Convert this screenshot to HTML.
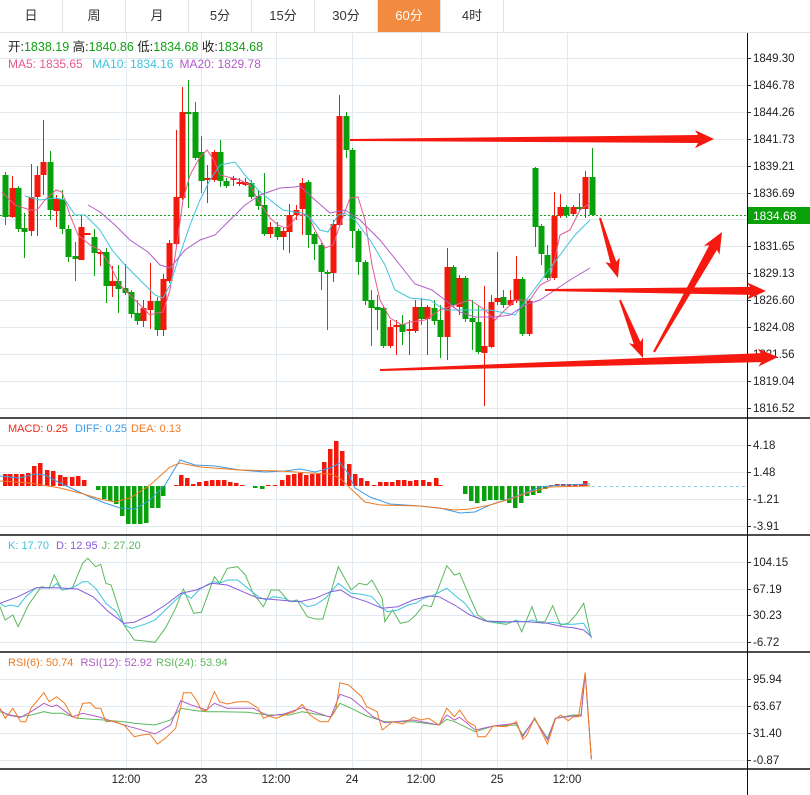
<!DOCTYPE html>
<html><head><meta charset="utf-8">
<style>
html,body{margin:0;padding:0;background:#fff;width:810px;height:795px;overflow:hidden;font-family:"Liberation Sans","Noto Sans CJK SC",sans-serif;}
.tabs{position:absolute;left:0;top:0;width:810px;height:32px;border-bottom:1px solid #e3e3e3;}
.tab{position:absolute;top:0;height:32px;width:62px;line-height:32px;text-align:center;font-size:13px;color:#333;border-right:1px solid #e3e3e3;}
.tab.on{background:#f28a3f;color:#fff;}
svg{position:absolute;left:0;top:0;}
</style></head><body>
<div class="tabs">
<div class="tab" style="left:0">日</div>
<div class="tab" style="left:63px">周</div>
<div class="tab" style="left:126px">月</div>
<div class="tab" style="left:189px">5分</div>
<div class="tab" style="left:252px">15分</div>
<div class="tab" style="left:315px">30分</div>
<div class="tab on" style="left:378px">60分</div>
<div class="tab" style="left:441px">4时</div>
</div>
<svg id="s" width="810" height="795" xmlns="http://www.w3.org/2000/svg" font-family="Liberation Sans, Noto Sans CJK SC, sans-serif">
<g id="grid"></g>
<g id="body"></g>
<text x="8" y="51" font-size="12.5" fill="#222">开:<tspan fill="#11a011">1838.19</tspan>  高:<tspan fill="#11a011">1840.86</tspan>  低:<tspan fill="#11a011">1834.68</tspan>  收:<tspan fill="#11a011">1834.68</tspan></text>
<text x="8" y="68" font-size="12" fill="#e8578e">MA5: 1835.65 <tspan dx="6" fill="#3ec3dc">MA10: 1834.16</tspan><tspan dx="6" fill="#b25cc8">MA20: 1829.78</tspan></text>
<text x="8" y="432" font-size="11" fill="#f02a1a">MACD: 0.25 <tspan dx="4" fill="#3d9be8">DIFF: 0.25</tspan><tspan dx="4" fill="#f07a20">DEA: 0.13</tspan></text>
<text x="8" y="549" font-size="11" fill="#3ec3dc">K: 17.70 <tspan dx="4" fill="#8a5cd8">D: 12.95</tspan><tspan dx="4" fill="#5cb85c">J: 27.20</tspan></text>
<text x="8" y="666" font-size="11" fill="#f07a20">RSI(6): 50.74 <tspan dx="4" fill="#b25cc8">RSI(12): 52.92</tspan><tspan dx="4" fill="#5cb85c">RSI(24): 53.94</tspan></text>
</svg>
<script>
var NS="http://www.w3.org/2000/svg",G=document.getElementById('grid'),B=document.getElementById('body');
function el(p,t,a,txt){var e=document.createElementNS(NS,t);for(var k in a)e.setAttribute(k,a[k]);if(txt!=null)e.textContent=txt;p.appendChild(e);return e;}
var GC="#e2eaf1";
// vertical grid
[126,201,276,352,421,497,567].forEach(function(x){el(G,'line',{x1:x+.5,y1:33,x2:x+.5,y2:769,stroke:GC});});
// horizontal grid & labels
function hg(y,lab){el(G,'line',{x1:0,y1:y+.5,x2:747,y2:y+.5,stroke:GC});el(G,'line',{x1:747,y1:y+.5,x2:751,y2:y+.5,stroke:'#333'});if(lab)el(G,'text',{x:753,y:y+4,'font-size':11.5,fill:'#222'},lab);}
var pl=["1849.30","1846.78","1844.26","1841.73","1839.21","1836.69","","1831.65","1829.13","1826.60","1824.08","1821.56","1819.04","1816.52"];
pl.forEach(function(l,i){hg(Math.round(58+i*26.9),l);});
[[445,"4.18"],[472,"1.48"],[499,"-1.21"],[526,"-3.91"]].forEach(function(a){hg(a[0],a[1]);});
[[562,"104.15"],[589,"67.19"],[615,"30.23"],[642,"-6.72"]].forEach(function(a){hg(a[0],a[1]);});
[[679,"95.94"],[706,"63.67"],[733,"31.40"],[760,"-0.87"]].forEach(function(a){hg(a[0],a[1]);});
// separators
[418,535,652,769].forEach(function(y){el(G,'line',{x1:0,y1:y,x2:810,y2:y,stroke:'#111','stroke-width':1.4});});
el(G,'line',{x1:747.5,y1:33,x2:747.5,y2:795,stroke:'#111'});
// date labels
[[126,"12:00"],[201,"23"],[276,"12:00"],[352,"24"],[421,"12:00"],[497,"25"],[567,"12:00"]].forEach(function(a){el(G,'text',{x:a[0],y:783,'font-size':11.5,fill:'#222','text-anchor':'middle'},a[1]);});
// dotted price line
el(B,'line',{x1:0,y1:215.5,x2:747,y2:215.5,stroke:'#1a9a1a','stroke-dasharray':'2,2'});
var R="#f2190c",GR="#08a00c";
// candles [x,top,bot,wt,wb,c]
var C=[[5,175,217,172,225,'g'],[12,188,217,176,218,'r'],[18,188,229,186,232,'g'],[24,228,232,213,258,'g'],[31,197,231,164,236,'r'],[37,175,197,166,236,'r'],[43,162,175,120,195,'r'],[50,162,210,151,220,'g'],[56,199,211,195,227,'r'],[62,199,229,190,234,'g'],[68,229,257,225,262,'g'],[75,256,259,242,281,'g'],[81,227,260,216,260,'r'],[87,233,235,233,235,'r'],[94,237,253,229,276,'g'],[100,252,254,250,266,'r'],[106,252,286,248,303,'g'],[112,281,286,266,297,'r'],[118,281,289,265,313,'g'],[125,288,293,264,295,'g'],[131,292,314,290,318,'g'],[137,313,321,300,325,'g'],[143,308,321,300,327,'r'],[150,301,310,263,329,'r'],[157,301,330,297,336,'g'],[163,279,330,274,336,'r'],[169,243,281,240,283,'r'],[176,197,244,130,246,'r'],[182,112,198,87,200,'r'],[188,112,114,80,208,'g'],[195,112,158,102,160,'g'],[201,152,181,136,193,'g'],[207,178,180,165,203,'r'],[214,152,180,150,182,'r'],[220,152,181,140,187,'g'],[226,181,186,178,188,'g'],[233,178,180,176,186,'r'],[239,182,184,178,186,'r'],[245,182,185,178,186,'r'],[251,183,197,180,199,'g'],[258,196,206,190,210,'g'],[264,205,234,173,236,'g'],[270,227,234,222,238,'r'],[277,227,237,222,240,'g'],[283,231,237,228,250,'r'],[289,215,232,204,253,'r'],[296,210,215,205,220,'r'],[302,183,209,178,235,'r'],[308,182,235,180,248,'g'],[314,234,244,232,260,'g'],[321,245,272,243,290,'g'],[327,272,274,270,330,'g'],[333,224,273,220,282,'r'],[339,116,225,95,227,'r'],[346,116,150,112,158,'g'],[352,150,231,148,248,'g'],[358,231,262,229,275,'g'],[365,262,301,260,305,'g'],[371,300,308,290,346,'g'],[377,307,310,295,330,'g'],[383,308,346,306,348,'g'],[390,327,346,320,348,'r'],[396,325,327,320,355,'r'],[402,324,332,315,345,'g'],[409,329,331,320,355,'r'],[415,307,331,300,333,'r'],[421,307,319,298,325,'g'],[427,307,319,305,355,'r'],[434,308,321,300,325,'g'],[440,320,337,305,358,'g'],[447,267,337,248,360,'r'],[453,267,305,265,308,'g'],[459,278,307,275,315,'r'],[465,278,319,276,322,'g'],[472,318,322,300,350,'g'],[478,322,352,305,354,'g'],[484,346,353,286,406,'r'],[491,302,347,295,348,'r'],[497,298,302,252,305,'r'],[503,297,305,290,308,'g'],[510,300,305,290,306,'r'],[516,279,301,256,303,'r'],[522,279,334,277,336,'g'],[529,301,334,299,336,'r'],[535,168,227,167,247,'g'],[541,226,254,224,265,'g'],[547,255,278,245,280,'g'],[554,216,278,192,280,'r'],[560,207,216,194,218,'r'],[566,207,215,205,218,'g'],[573,207,214,205,216,'r'],[579,207,209,193,210,'g'],[585,177,209,171,218,'r'],[592,177,215,148,216,'g']];
C.forEach(function(c){var col=c[5]=='r'?R:GR;el(B,'line',{x1:c[0]+.5,y1:c[3],x2:c[0]+.5,y2:c[4],stroke:col});el(B,'rect',{x:c[0]-2.5,y:c[1],width:6,height:Math.max(1.5,c[2]-c[1]),fill:col});});
function line(pts,col,w){el(B,'polyline',{points:pts.map(function(p){return p.join(',')}).join(' '),fill:'none',stroke:col,'stroke-width':w||1});}
line([[2,192],[15,205],[30,210],[37,210],[45,200],[56,190],[62,192],[70,215],[78,235],[90,245],[100,250],[110,265],[120,285],[130,295],[140,305],[150,315],[157,313],[163,312],[170,290],[176,250],[183,200],[190,175],[200,157],[207,150],[214,160],[220,175],[232,178],[240,180],[250,185],[258,200],[270,218],[278,225],[285,228],[290,225],[298,215],[308,215],[315,230],[325,248],[333,245],[340,225],[350,198],[358,197],[365,220],[372,265],[380,300],[390,318],[402,325],[410,322],[425,320],[440,310],[455,305],[470,300],[485,310],[495,320],[505,310],[515,300],[530,300],[540,285],[550,280],[560,235],[570,230],[580,210],[590,203]],"#e8578e");
line([[25,196],[40,200],[55,198],[65,200],[75,215],[85,215],[100,230],[112,250],[125,265],[140,280],[155,295],[163,298],[170,285],[178,260],[190,225],[200,200],[210,180],[220,165],[235,162],[245,175],[258,190],[270,200],[283,210],[295,212],[303,213],[310,218],[320,230],[328,232],[338,215],[345,213],[355,220],[370,240],[385,265],[395,290],[410,298],[430,300],[445,310],[460,310],[475,310],[490,310],[505,313],[515,315],[530,295],[545,275],[560,255],[575,235],[590,220]],"#3ec3dc");
line([[88,205],[100,212],[115,225],[130,240],[148,252],[160,265],[170,268],[185,250],[200,240],[215,235],[230,220],[245,205],[260,195],[280,188],[295,187],[300,186],[315,200],[330,213],[345,210],[360,220],[380,240],[400,265],[415,284],[432,290],[445,300],[460,312],[475,317],[495,317],[510,315],[525,305],[540,300],[555,290],[570,280],[590,268]],"#b25cc8");
// MACD
var Z=486;
var M=[[5,12],[10,12],[16,12],[22,12],[28,13],[34,20],[40,23],[47,16],[53,15],[60,11],[65,9],[72,9],[78,10],[84,6],[98,-4],[104,-13],[110,-15],[116,-18],[122,-30],[128,-38],[134,-38],[140,-38],[146,-37],[152,-22],[158,-22],[163,-10],[176,1],[181,11],[187,8],[193,2],[199,4],[206,5],[212,6],[218,6],[224,6],[230,4],[236,3],[242,1],[255,-2],[262,-3],[268,1],[275,1],[282,6],[288,11],[294,12],[300,13],[306,11],[312,12],[318,12],[324,24],[330,37],[336,45],[342,35],[349,22],[355,12],[361,8],[367,5],[374,1],[380,4],[386,4],[392,4],[398,6],[404,6],[410,5],[416,6],[423,6],[429,4],[436,8],[440,1],[465,-8],[471,-15],[477,-17],[484,-15],[490,-14],[496,-14],[502,-14],[509,-17],[515,-22],[521,-17],[527,-10],[533,-9],[539,-7],[545,-3],[551,1],[557,2],[563,2],[569,2],[575,2],[581,2],[585,5]];
M.forEach(function(m){var h=m[1];el(B,'rect',{x:m[0]-2,y:h>0?Z-h:Z,width:4.5,height:Math.abs(h),fill:h>0?R:GR});});
el(B,'line',{x1:592,y1:Z+.5,x2:747,y2:Z+.5,stroke:'#8fd0ef','stroke-dasharray':'3,3'});
line([[0,476],[20,478],[35,474],[45,475],[60,483],[75,490],[90,497],[105,503],[120,508],[135,509],[150,500],[165,485],[180,460],[195,465],[215,466],[240,470],[265,472],[285,471],[300,469],[315,472],[330,468],[340,463],[348,473],[355,488],[370,497],[390,504],[420,506],[440,508],[460,513],[475,512],[490,505],[505,500],[520,495],[540,487],[560,485],[590,484]],"#3d9be8");
line([[0,481],[30,483],[60,488],[80,493],[100,499],[115,502],[130,498],[150,485],[170,467],[180,463],[200,467],[240,470],[280,471],[310,473],[330,474],[340,478],[350,488],[365,502],[380,505],[420,506],[455,510],[470,509],[490,505],[510,499],[530,492],[550,487],[590,486]],"#f07a20");
function zl(pts,oy,col){line(pts.map(function(p){return [+(p[0]/1.936).toFixed(1),+(p[1]/3+oy).toFixed(1)];}),col);}
zl([[0,215],[10,255],[25,240],[35,275],[55,210],[80,155],[95,160],[105,120],[120,165],[140,160],[160,85],[170,70],[185,95],[195,88],[205,145],[215,150],[240,270],[260,315],[280,318],[300,322],[320,280],[340,220],[355,162],[375,235],[390,232],[415,125],[425,145],[440,100],[460,95],[475,120],[490,175],[510,215],[525,165],[540,165],[560,200],[575,195],[595,245],[610,252],[625,252],[655,95],[680,165],[695,145],[710,150],[720,135],[740,190],[745,260],[760,225],[775,265],[790,260],[805,240],[820,210],[835,215],[865,92],[880,120],[890,115],[905,170],[925,240],[945,260],[980,268],[1000,255],[1010,290],[1030,215],[1040,260],[1055,260],[1070,212],[1085,270],[1100,265],[1115,240],[1130,205],[1145,310]],535,"#5cb85c");
zl([[0,205],[10,215],[20,210],[35,215],[50,185],[70,158],[90,158],[100,158],[110,145],[120,165],[135,160],[145,155],[160,140],[170,140],[185,160],[205,205],[225,230],[240,270],[255,280],[280,268],[300,255],[320,225],[340,195],[355,175],[370,190],[385,165],[400,150],[415,140],[425,145],[440,135],[460,135],[480,160],[500,185],[515,195],[530,185],[550,190],[565,200],[580,198],[595,215],[610,210],[630,190],[655,145],[680,175],[700,178],[720,185],[740,220],[750,230],[770,225],[790,210],[805,205],[820,190],[840,180],[865,160],[880,180],[900,205],[920,245],[940,258],[960,262],[980,262],[1000,258],[1020,260],[1030,255],[1050,265],[1070,262],[1090,268],[1110,268],[1130,265],[1145,305]],535,"#3ec3dc");
zl([[0,205],[35,185],[70,158],[110,158],[150,162],[180,185],[210,230],[240,265],[260,262],[290,240],[320,210],[350,175],[380,165],[410,145],[440,150],[470,170],[500,190],[540,195],[580,200],[610,190],[640,170],[660,165],[680,185],[710,200],[740,220],[770,215],[800,195],[830,183],[850,185],[880,210],[910,240],[940,258],[980,260],[1020,260],[1060,265],[1090,275],[1110,278],[1130,285],[1145,305]],535,"#8a5cd8");
zl([[0,215],[20,225],[40,230],[60,225],[85,215],[100,220],[120,220],[150,235],[200,240],[240,245],[260,250],[300,255],[330,240],[350,205],[380,212],[400,215],[430,215],[480,217],[520,225],[560,225],[585,215],[640,230],[658,190],[680,205],[710,228],[745,245],[800,245],[850,255],[865,238],[880,245],[920,275],[955,258],[1000,255],[1012,285],[1035,238],[1060,295],[1075,235],[1110,225],[1125,225],[1133,98],[1145,358]],640,"#5cb85c");
zl([[0,210],[15,225],[40,232],[60,215],[85,190],[100,200],[110,195],[140,230],[160,220],[190,230],[220,245],[240,255],[270,268],[300,282],[330,255],[350,182],[370,195],[400,210],[415,190],[440,205],[490,205],[520,228],[550,222],[585,203],[640,232],[658,163],[680,175],[700,200],[720,228],[745,248],[800,240],[850,255],[865,225],[880,240],[890,232],[920,270],[955,258],[1000,250],[1012,290],[1035,235],[1060,300],[1075,235],[1110,228],[1125,228],[1133,98],[1145,358]],640,"#b25cc8");
zl([[0,205],[10,235],[25,205],[40,245],[50,245],[60,205],[85,158],[95,185],[110,170],[125,190],[140,230],[150,235],[160,190],[175,188],[185,205],[195,205],[205,245],[220,243],[240,255],[260,290],[275,285],[290,282],[305,312],[320,295],[340,265],[350,200],[355,158],[370,158],[380,180],[390,210],[400,212],[415,155],[425,185],[440,192],[460,185],[480,185],[500,205],[510,235],[520,228],[535,235],[550,225],[570,215],[585,193],[600,225],[620,245],[635,245],[650,210],[658,128],[675,135],[700,170],[710,200],[730,215],[740,270],[760,245],[780,252],[800,232],[815,240],[830,235],[850,255],[865,205],[880,230],[890,210],[905,245],[920,258],[925,290],[940,290],[955,258],[980,260],[1000,245],[1012,298],[1020,285],[1035,233],[1060,312],[1075,238],[1085,225],[1100,242],[1110,230],[1120,230],[1133,98],[1145,358]],640,"#f07a20");
// price box
el(B,'rect',{x:748,y:207,width:62,height:17,fill:'#0aa00a'});
el(B,'text',{x:753,y:220,'font-size':12,fill:'#fff'},"1834.68");
// arrows
function arrow(x1,y1,x2,y2,w1,w2,hw,hl){var dx=x2-x1,dy=y2-y1,L=Math.sqrt(dx*dx+dy*dy),ux=dx/L,uy=dy/L,nx=-uy,ny=ux;var bx=x2-ux*hl,by=y2-uy*hl;
var p=[[x1+nx*w1/2,y1+ny*w1/2],[bx+nx*w2/2,by+ny*w2/2],[bx-ux*3+nx*hw/2,by-uy*3+ny*hw/2],[x2,y2],[bx-ux*3-nx*hw/2,by-uy*3-ny*hw/2],[bx-nx*w2/2,by-ny*w2/2],[x1-nx*w1/2,y1-ny*w1/2]];
el(B,'polygon',{points:p.map(function(q){return q[0].toFixed(1)+','+q[1].toFixed(1)}).join(' '),fill:'#f5190f'});}
arrow(350,140,714,139,2,8,18,16);
arrow(600,218,618,278,2,6,15,16);
arrow(545,290,766,291,2,8,17,16);
arrow(620,300,643,358,2,7,15,16);
arrow(654,352,722,232,2,9,18,18);
arrow(380,370,778,357,2,9,18,17);
</script>
</body></html>
